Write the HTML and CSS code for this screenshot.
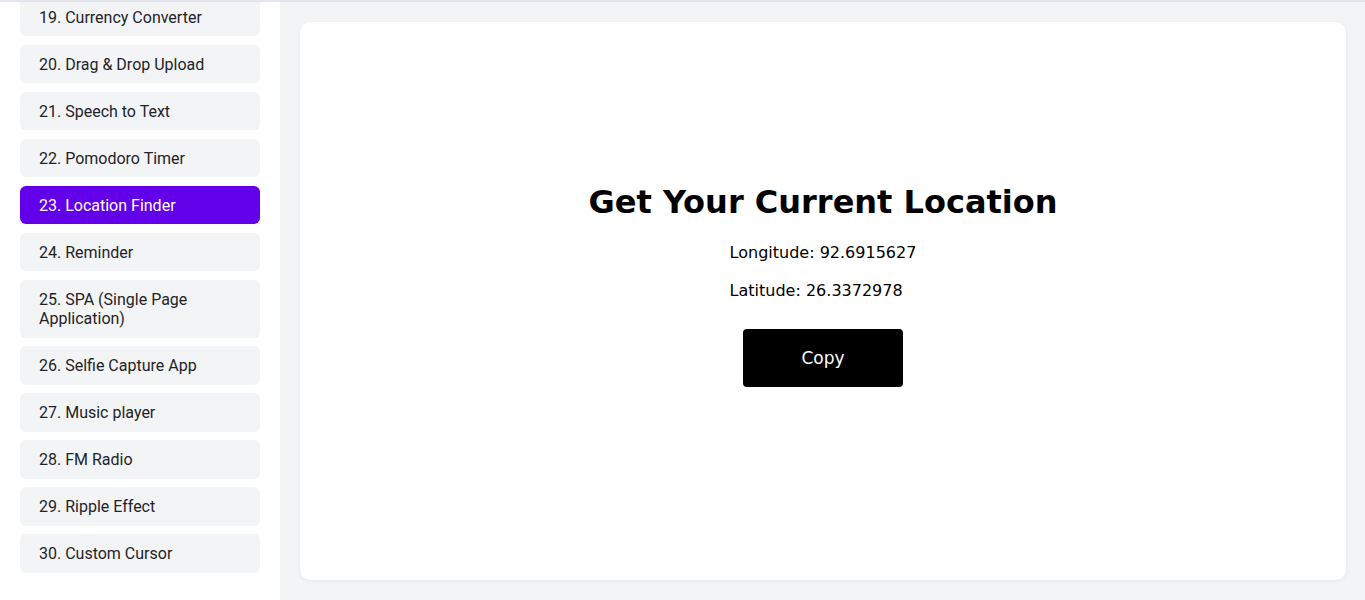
FILE: index.html
```html
<!DOCTYPE html>
<html>
<head>
<meta charset="utf-8">
<link rel="stylesheet" href="styles.css">
</head>
<body>
<div class="app">
  <aside class="sidebar">
    <ul class="nav">
      <li class="nav-item">19. Currency Converter</li>
      <li class="nav-item">20. Drag &amp; Drop Upload</li>
      <li class="nav-item">21. Speech to Text</li>
      <li class="nav-item">22. Pomodoro Timer</li>
      <li class="nav-item active">23. Location Finder</li>
      <li class="nav-item">24. Reminder</li>
      <li class="nav-item">25. SPA (Single Page Application)</li>
      <li class="nav-item">26. Selfie Capture App</li>
      <li class="nav-item">27. Music player</li>
      <li class="nav-item">28. FM Radio</li>
      <li class="nav-item">29. Ripple Effect</li>
      <li class="nav-item">30. Custom Cursor</li>
    </ul>
  </aside>
  <main class="main">
    <section class="card">
      <h1 class="title">Get Your Current Location</h1>
      <div class="coords">
        <p class="coord">Longitude: 92.6915627</p>
        <p class="coord">Latitude: 26.3372978</p>
      </div>
      <button class="copy-btn">Copy</button>
    </section>
  </main>
</div>
</body>
</html>
```

FILE: styles.css
```css
* { box-sizing: border-box; }
html, body { margin: 0; padding: 0; height: 100%; }
body {
  border-top: 2px solid #e4e4ee;
  background: #f3f4f6;
  overflow: hidden;
}
.app {
  display: flex;
  height: 598px;
}
.sidebar {
  width: 280px;
  flex: none;
  background: #ffffff;
  padding: 0 20px;
  overflow: hidden;
}
.nav {
  list-style: none;
  margin: -4px 0 0;
  padding: 0;
  display: flex;
  flex-direction: column;
  gap: 8.8px;
}
.nav-item {
  font-family: Roboto, "Liberation Sans", sans-serif;
  font-size: 16px;
  line-height: 19.5px;
  color: #1f2328;
  background: #f3f4f6;
  border-radius: 6px;
  padding: 9.7px 19px 9px;
}
.nav-item.active {
  background: #6200ea;
  color: #ffffff;
}
.main {
  flex: 1;
  padding: 20px 19px 20px 20px;
  display: flex;
}
.card {
  flex: 1;
  background: #ffffff;
  border-radius: 10px;
  box-shadow: 0 1px 4px rgba(0,0,0,0.06);
  display: flex;
  flex-direction: column;
  align-items: center;
  justify-content: center;
  padding-bottom: 34px;
  font-family: "DejaVu Sans", Verdana, sans-serif;
  color: #000;
}
.title {
  margin: 0 0 20px;
  font-size: 32px;
  font-weight: bold;
  line-height: 40px;
}
.coords {
  text-align: left;
}
.coord {
  margin: 0 0 16px;
  font-size: 16px;
  line-height: 22px;
}
.copy-btn {
  margin-top: 11px;
  width: 160px;
  height: 58px;
  background: #000;
  color: #fff;
  border: none;
  border-radius: 4px;
  font-family: "DejaVu Sans", Verdana, sans-serif;
  font-size: 17px;
}
```
